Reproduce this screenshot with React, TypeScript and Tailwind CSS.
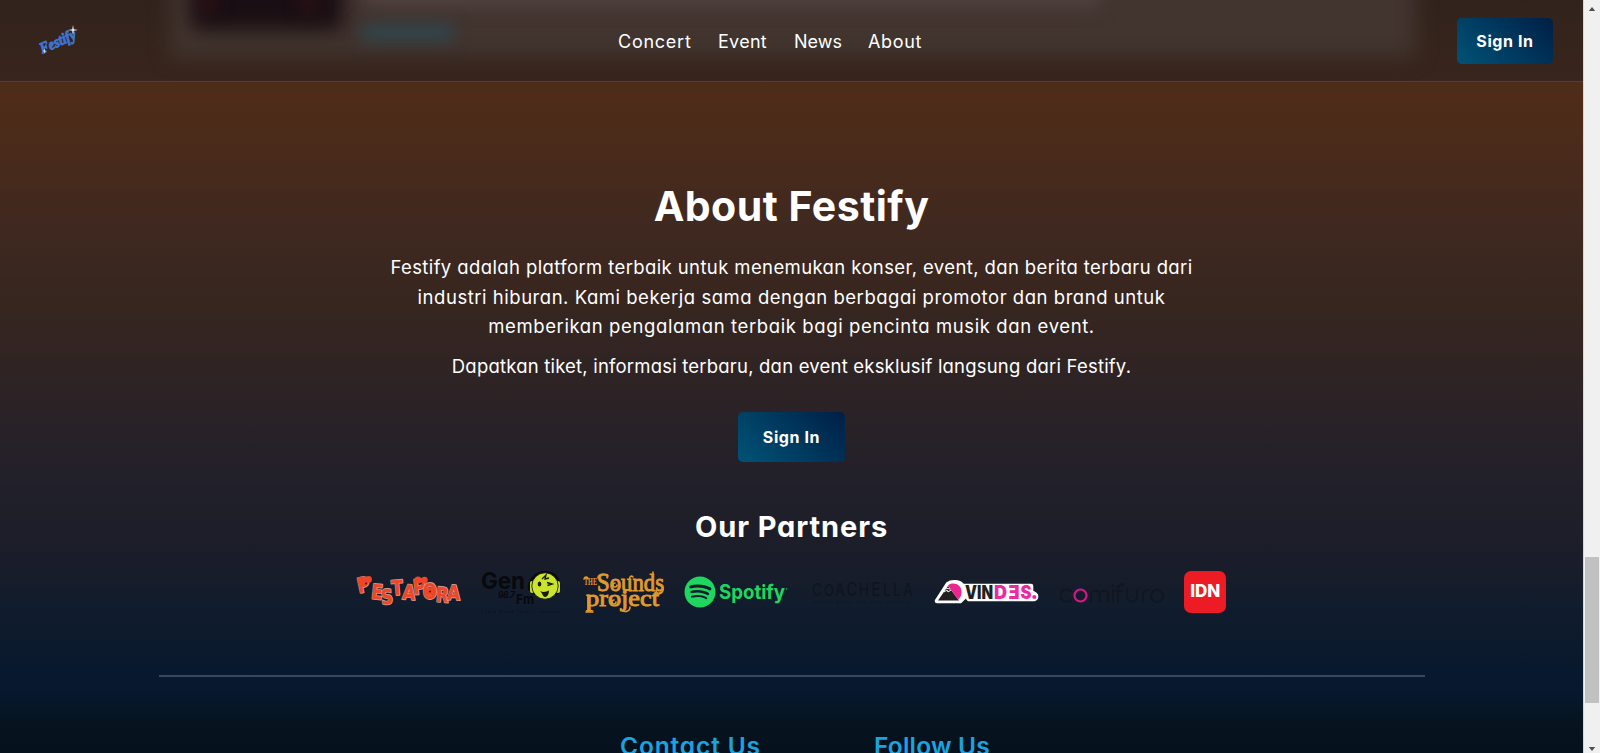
import { FaSpotify } from "react-icons/fa";

function FestifyMark() {
  return (
    <svg viewBox="0 0 53 42" className="h-[42px] w-[53px] overflow-visible" aria-label="Festify">
      <g transform="rotate(-24 29 22)">
        <text x="9" y="26" textLength="38" lengthAdjust="spacingAndGlyphs" fontFamily="Liberation Serif, serif" fontStyle="italic" fontWeight="700" fontSize="15.500" fill="#3f74d4" stroke="#3f74d4" strokeWidth="0.9">
          Festify
        </text>
      </g>
      <path d="M43 5l.8 4.200L48 10l-4.200.8L43 15l-.8-4.200L38 10l4.200-.8z" fill="#e6eefc" />
      <path d="M14.500 28l.5 2.500 2 .5-2 .5-.5 2.500-.5-2.500-2-.5 2-.5z" fill="#cfe0fb" />
    </svg>
  );
}

const pestapora = [
  { c: "P", x: 9, y: 21, r: -12 },
  { c: "E", x: 20.5, y: 28, r: 6 },
  { c: "S", x: 31.5, y: 33, r: -4 },
  { c: "T", x: 42, y: 24, r: -5 },
  { c: "A", x: 52.5, y: 28.5, r: 5 },
  { c: "P", x: 64, y: 23, r: -6 },
  { c: "O", x: 74, y: 28, r: 0 },
  { c: "R", x: 86, y: 31, r: 5 },
  { c: "A", x: 97.5, y: 29, r: 2 },
];

function Pestapora() {
  return (
    <svg viewBox="0 0 104 42" className="h-[42px] w-[104px] overflow-visible">
      <g fill="#ee4627" stroke="#cc988b" strokeWidth="1.800" strokeLinejoin="round" paintOrder="stroke" fontFamily="DejaVu Sans, sans-serif" fontWeight="700" fontSize="20.500" textAnchor="middle">
        {pestapora.map((p, j) => (
          <text key={j} transform={`translate(${p.x - 1} ${p.y}) rotate(${p.r}) scale(.82 1)`}>
            {p.c}
          </text>
        ))}
      </g>
      <g fill="#ee4627">
        <circle cx="4.500" cy="9.500" r="4" />
        <circle cx="11.500" cy="8.500" r="3.400" />
        <circle cx="61" cy="9" r="3.600" />
        <circle cx="67.500" cy="9" r="3.200" />
        <circle cx="73" cy="20.500" r="4.200" />
      </g>
      <g fill="#5a1a12">
        <circle cx="9" cy="12.500" r="1.100" />
        <circle cx="64" cy="12.500" r="1.100" />
        <circle cx="73" cy="20.500" r="1.100" />
      </g>
    </svg>
  );
}

function GenFm() {
  return (
    <svg viewBox="0 0 81 42" className="h-[42px] w-[81px] overflow-visible">
      <g fill="#07090d" fontFamily="Inter, sans-serif">
        <text x="0" y="18" fontSize="23" fontWeight="700" textLength="44" lengthAdjust="spacingAndGlyphs">Gen</text>
        <text x="17" y="27" fontSize="8.500" fontWeight="700" fontStyle="italic" textLength="17">98.7</text>
        <text x="35" y="32.500" fontSize="13.500" fontWeight="700" textLength="18" lengthAdjust="spacingAndGlyphs">Fm</text>
        <text x="0" y="42" fontSize="3.500" textLength="78" opacity="0.7">Suara Musik Terkini Jakarta</text>
      </g>
      <path d="M47 18C46 8 55 0 64 0s17 6 15 18c0 3-2 6-3 6H52z" fill="#07090d" />
      <rect x="49" y="10" width="4" height="12" rx="2" fill="#c4dc2f" />
      <rect x="75" y="10" width="4" height="12" rx="2" fill="#c4dc2f" />
      <circle cx="64" cy="15" r="13.200" fill="#cbe42f" stroke="#07090d" strokeWidth="0.8" />
      <path d="M61 8l4-4-1 4 4-1" fill="none" stroke="#171b0b" strokeWidth="1.300" />
      <ellipse cx="58.500" cy="13" rx="1.800" ry="2.600" fill="#171b0b" />
      <path d="M66 11.500l5 1.500-4.500 1.500" fill="none" stroke="#171b0b" strokeWidth="1.500" />
      <path d="M59 20c3 1.500 6 1 9-.5 0 4-2 6.500-4 6.500s-2-3-5-6z" fill="#171b0b" />
    </svg>
  );
}

function SoundsProject() {
  return (
    <svg viewBox="0 0 82 42" className="h-[42px] w-[82px] overflow-visible">
      <g fill="#e19a2c" fontFamily="Liberation Serif, serif">
        <text x="1" y="14" fontSize="10" fontWeight="700" textLength="13" lengthAdjust="spacingAndGlyphs">THE</text>
        <text x="14" y="19.500" fontSize="25" fontWeight="400" stroke="#e19a2c" strokeWidth="0.9" textLength="67" lengthAdjust="spacingAndGlyphs">Sounds</text>
        <text x="3" y="35" fontSize="24" fontWeight="400" stroke="#e19a2c" strokeWidth="0.9" textLength="73" lengthAdjust="spacingAndGlyphs">project</text>
      </g>
      <g fill="none" stroke="#e19a2c" strokeWidth="1.600" strokeLinecap="round">
        <path d="M15 7c0-4 8-5 10-2M1 8c1-3 4-2 4 0M70 1v5M50 6c-2-2-4 0-3 2" />
        <path d="M3 41h7M38 38c2 4 9 3 9-2M71 23c5 1 10-1 9-6M73 20c1 3 3 3 5 1M5 24v16" />
        <path d="M32 12a2 2 0 1 0 2 2M31 29a2 2 0 1 0 2 2" />
      </g>
    </svg>
  );
}

const coachella = [
  { c: "C", x: 7, s: 17 },
  { c: "O", x: 19, s: 16 },
  { c: "A", x: 30, s: 17 },
  { c: "C", x: 42, s: 18 },
  { c: "H", x: 54, s: 17 },
  { c: "E", x: 66, s: 18 },
  { c: "L", x: 77, s: 17 },
  { c: "L", x: 87, s: 17 },
  { c: "A", x: 98, s: 17 },
];

function Coachella() {
  return (
    <svg viewBox="0 0 105 42" className="h-[42px] w-[105px]">
      <g fill="#0f151e" fontFamily="Inter, sans-serif">
        {coachella.map((l, i) => (
          <text key={i} transform={`translate(${l.x} 25) scale(.82 1)`} fontSize={l.s} fontWeight="500" textAnchor="middle">{l.c}</text>
        ))}
        <text x="3" y="33" fontSize="3.800" textLength="98">VALLEY MUSIC AND ARTS FESTIVAL</text>
      </g>
    </svg>
  );
}

function Vindes() {
  return (
    <svg viewBox="0 0 104 42" className="h-[42px] w-[104px] overflow-visible" fontFamily="Inter, sans-serif" fontWeight="900" fontSize="18.500">
      <path
        d="M2 30L13 13c4-3 12-2 14.500 2H96v6l4 2.500a2.500 2.500 0 0 1-1 4.500H34l-3-4-6 6z"
        fill="#fff"
        stroke="#fff"
        strokeWidth="4.600"
        strokeLinejoin="round"
      />
      <path d="M3 29.500L13 15l11 14.500z" fill="#231f20" />
      <path d="M13 14.500c4-4 14-2 13.500 7 0 4-2 6-3.500 7z" fill="#ec2590" />
      <path d="M9 21l3-2 1 2 3-2M11 17l4 1" fill="none" stroke="#fff" strokeWidth="1" />
      <g fill="#231f20">
        <text x="30" y="28" textLength="28" lengthAdjust="spacingAndGlyphs">VIN</text>
      </g>
      <g fill="#ec2aa0">
        <text x="59" y="28" textLength="13" lengthAdjust="spacingAndGlyphs">D</text>
        <text transform="translate(84.500 28) scale(-1 1)" textLength="11" lengthAdjust="spacingAndGlyphs">E</text>
        <text x="85.500" y="28" textLength="11" lengthAdjust="spacingAndGlyphs">S</text>
        <circle cx="99.300" cy="26" r="2.100" />
      </g>
    </svg>
  );
}

function Comifuro() {
  return (
    <svg viewBox="0 0 104 42" className="h-[42px] w-[104px]">
      <g fill="none" stroke="#11161f" strokeWidth="2" strokeLinecap="round">
        <path d="M11 20a6.300 6.300 0 1 0 0 9" />
        <path d="M31 31v-7a4.300 4.300 0 0 1 8.600 0v7M39.600 24a4.300 4.300 0 0 1 8.600 0v7" />
        <path d="M53 19v12M53 14v.5M58 31V18c0-3 2-4.500 5-4.500M55.500 20h7" />
        <path d="M67 19v6.500a5 5 0 0 0 10 0V19M83 31v-7c0-3 2-5 5-5" />
        <circle cx="97" cy="25" r="6" />
      </g>
      <circle cx="20.500" cy="24.500" r="6" fill="none" stroke="#d01b86" strokeWidth="2.200" />
    </svg>
  );
}

const signIn =
  "flex items-center justify-center rounded-[5px] bg-[linear-gradient(45deg,#005377,#001f46)] text-[16px] font-bold tracking-[0.6px] text-white";

export default function App() {
  return (
    <div className="flex h-[753px] w-[1600px] overflow-hidden font-['Inter',sans-serif] text-white [font-feature-settings:'cv11']">
      <div className="flex w-[1583px] flex-col overflow-hidden bg-[linear-gradient(180deg,#4e2c18_82px,#4b2b1a_140px,#40291f_220px,#37261f_300px,#2d2325_390px,#22202a_480px,#1a1d29_560px,#101c2d_610px,#0b1a2c_650px,#07182f_690px,#061420_725px,#05111d_753px)]">
        <header className="relative h-[82px] shrink-0 overflow-hidden border-b border-[#553d35] bg-linear-to-b from-[#31231c] to-[#38251d]">
          <div className="absolute -top-10 left-[170px] h-[97px] w-[1246px] bg-[#42342f] blur-[10px]" />
          <div className="absolute -top-8 left-[364px] h-[38px] w-[736px] bg-[#514441] blur-[9px]" />
          <div className="absolute -top-10 left-[191px] h-[70px] w-[152px] bg-[#190e13] blur-[10px]" />
          <div className="absolute -top-8 left-[200px] h-[45px] w-[16px] bg-[#2c1115] blur-[8px]" />
          <div className="absolute -top-8 left-[300px] h-[45px] w-[16px] bg-[#2c1115] blur-[8px]" />
          <div className="absolute top-[24px] left-[362px] h-[17px] w-[92px] bg-[#2f464d] blur-[8px]" />
          <div className="relative flex h-full items-center justify-between px-[30px]">
            <FestifyMark />
            <nav className="mt-px flex gap-[26px] text-[18px] whitespace-nowrap">
              <a className="w-[74px] tracking-[0.75px]">Concert</a>
              <a className="w-[50px] tracking-[0.28px]">Event</a>
              <a className="w-[49px]">News</a>
              <a className="-ml-px w-[54px] tracking-[0.65px]">About</a>
            </nav>
            <button className={signIn + " mt-px h-[46px] w-[96px]"}>Sign In</button>
          </div>
        </header>

        <section className="flex shrink-0 flex-col items-center pt-[99px] whitespace-nowrap">
          <h1 className="text-[41px] leading-[50px] font-bold tracking-[0.5px]">About Festify</h1>
          <div className="mt-[22px] flex flex-col items-center text-[18.5px] leading-[29.6px]">
            <p className="flex flex-col items-center">
              <span className="tracking-[0.39px]">Festify adalah platform terbaik untuk menemukan konser, event, dan berita terbaru dari</span>
              <span className="tracking-[0.53px]">industri hiburan. Kami bekerja sama dengan berbagai promotor dan brand untuk</span>
              <span className="tracking-[0.61px]">memberikan pengalaman terbaik bagi pencinta musik dan event.</span>
            </p>
            <p className="mt-[10.4px] tracking-[0.2px]">Dapatkan tiket, informasi terbaru, dan event eksklusif langsung dari Festify.</p>
          </div>
          <button className={signIn + " mt-[30.4px] h-[50px] w-[107px]"}>Sign In</button>
          <h2 className="mt-[45px] text-[29px] leading-[40px] font-bold tracking-[0.9px]">Our Partners</h2>
          <div className="mt-[23px] flex h-[43px] items-center gap-[20.5px]">
            <Pestapora />
            <GenFm />
            <SoundsProject />
            <div className="flex w-[104px] items-center gap-[3px] text-[#1fd660]">
              <FaSpotify className="-ml-px size-[32px] shrink-0" />
              <svg viewBox="0 0 70 42" className="h-[42px] w-[70px] overflow-visible" fill="currentColor">
                <text x="0" y="28" fontFamily="Inter, sans-serif" fontWeight="700" fontSize="20" textLength="66" lengthAdjust="spacingAndGlyphs">Spotify</text>
                <circle cx="67.500" cy="18" r="0.900" opacity="0.6" />
              </svg>
            </div>
            <Coachella />
            <Vindes />
            <Comifuro />
            <div className="flex size-[42px] items-center justify-center rounded-[7px] bg-[#ed1c24]">
              <span className="text-[17px] leading-none font-extrabold">IDN</span>
            </div>
          </div>
        </section>

        <footer className="mt-[62px] flex shrink-0 flex-col items-center">
          <hr className="h-0.5 w-[1266px] border-0 bg-[#3b4560]" />
          <div className="mt-[51px] flex w-full gap-[114px] pl-[620px] text-[24.5px] leading-[36px] font-semibold whitespace-nowrap text-[#1ba3e0]">
            <h3 className="w-[140px] tracking-[0.87px]">Contact Us</h3>
            <h3 className="tracking-[0.2px]">Follow Us</h3>
          </div>
        </footer>
      </div>
      <div className="flex w-[17px] flex-col items-center border-l border-[#d5d5da] bg-[#f0f0f0]">
        <svg viewBox="0 0 8 5" className="mt-[7px] h-[4px] w-[8px]"><path d="M0 5L4 0l4 5z" fill="#505050" /></svg>
        <div className="mt-[546px] h-[146px] w-[14px] bg-[#c1c1c1]" />
        <svg viewBox="0 0 8 5" className="mt-[44px] h-[4px] w-[8px]"><path d="M0 0l4 5 4-5z" fill="#505050" /></svg>
      </div>
    </div>
  );
}
